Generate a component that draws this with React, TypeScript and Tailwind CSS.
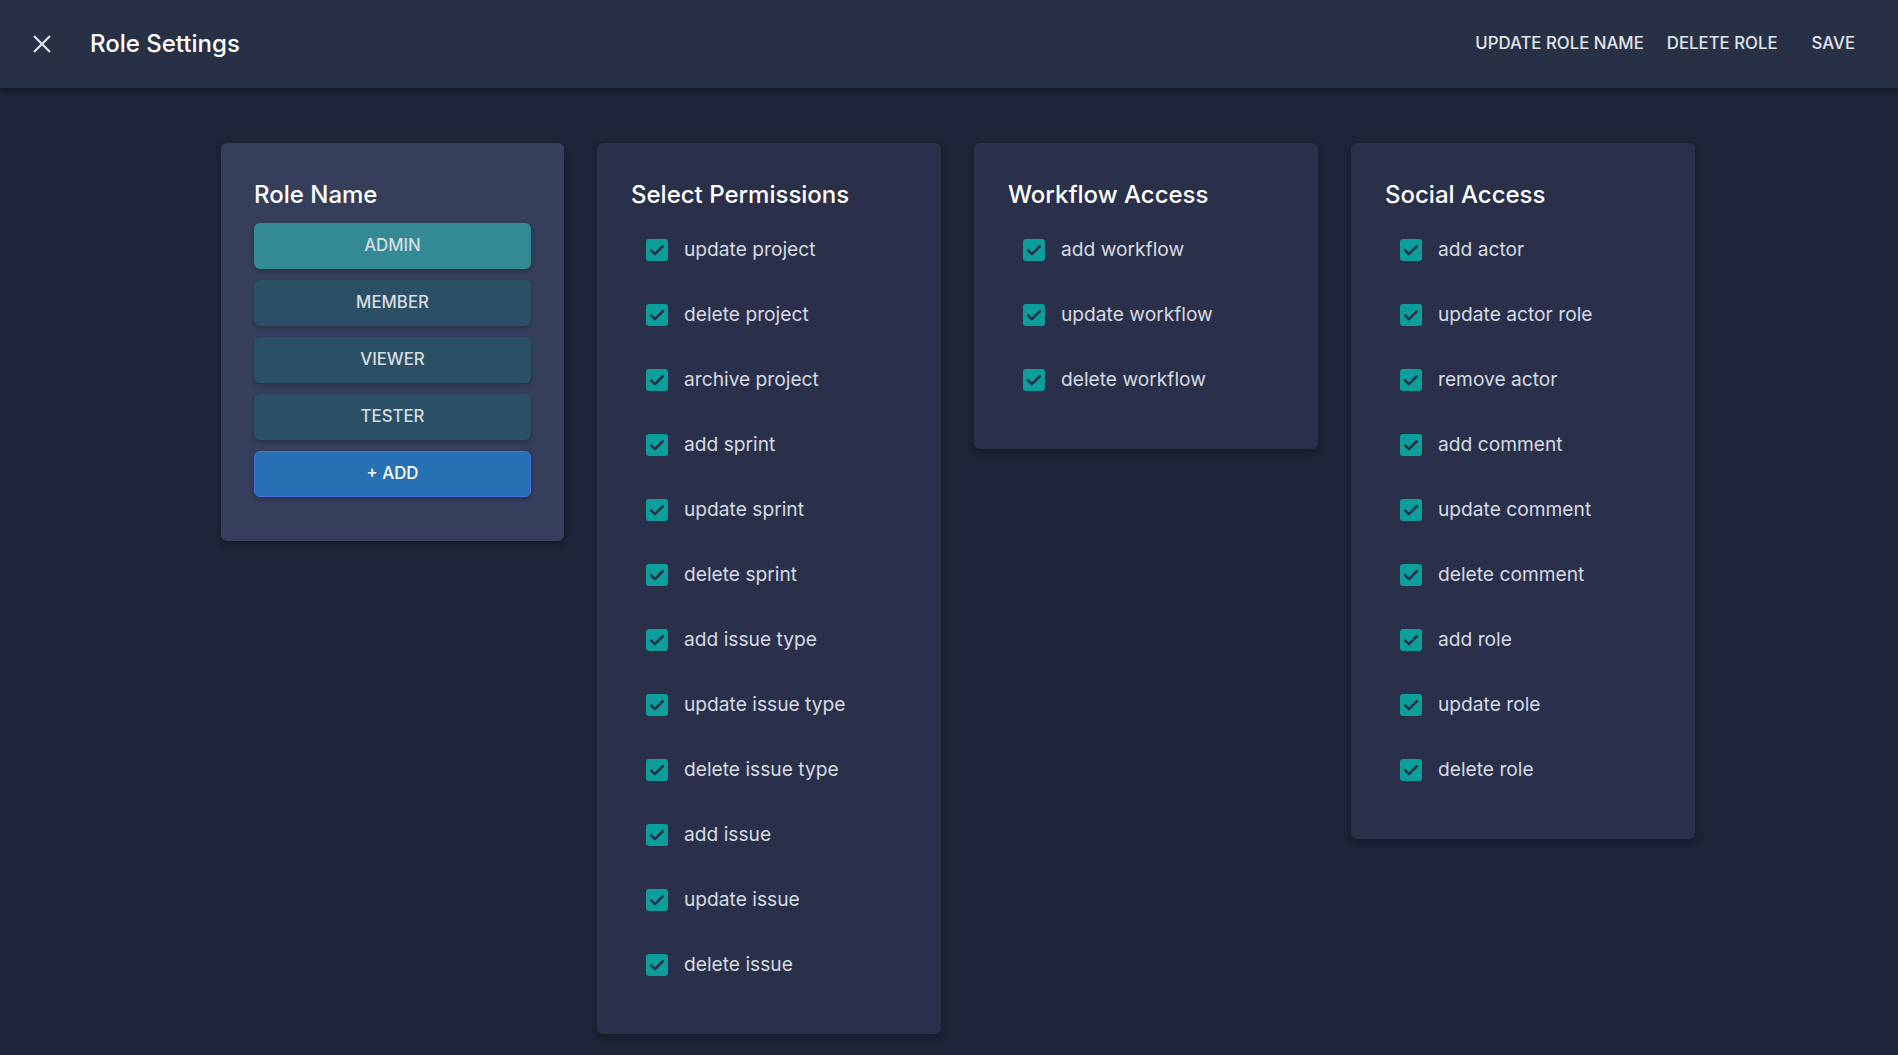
const permissions = [
  "update project",
  "delete project",
  "archive project",
  "add sprint",
  "update sprint",
  "delete sprint",
  "add issue type",
  "update issue type",
  "delete issue type",
  "add issue",
  "update issue",
  "delete issue",
];

const workflow = ["add workflow", "update workflow", "delete workflow"];

const social = [
  "add actor",
  "update actor role",
  "remove actor",
  "add comment",
  "update comment",
  "delete comment",
  "add role",
  "update role",
  "delete role",
];

const roles = ["ADMIN", "MEMBER", "VIEWER", "TESTER"];

function CheckRow({ label }: { label: string }) {
  return (
    <label className="flex h-[65px] items-center pl-[15px]">
      <span className="flex h-[22px] w-[22px] items-center justify-center rounded-[3px] bg-[#0c9e9a]">
        <svg viewBox="0 0 24 24" className="h-[20px] w-[20px]" fill="none">
          <path d="M5 12.5l4.5 4.5L19 7.5" stroke="#2a3049" strokeWidth="3" strokeLinecap="round" strokeLinejoin="round" />
        </svg>
      </span>
      <span className="ml-[16px] text-[19.2px] text-[#d6dae2]">{label}</span>
    </label>
  );
}

function Card({ title, items }: { title: string; items: string[] }) {
  return (
    <div className="w-[344px] rounded-md bg-[#2a3049] px-[34px] pt-[36px] pb-[37px] shadow-[0_3px_8px_rgba(0,0,0,0.3)]">
      <h2 className="text-[24px] font-medium leading-[32px] text-white">{title}</h2>
      <div className="mt-[6px] flex flex-col">
        {items.map((i) => (
          <CheckRow key={i} label={i} />
        ))}
      </div>
    </div>
  );
}

export default function App() {
  return (
    <div className="min-h-[1055px] bg-[#1e2439]" style={{ fontFamily: "Inter, 'Noto Sans', sans-serif" }}>
      <header className="relative z-10 flex h-[88px] items-center bg-[#283046] shadow-[0_3px_6px_rgba(0,0,0,0.35)]">
        <button className="ml-[33px] flex h-[18px] w-[18px] items-center justify-center">
          <svg viewBox="0 0 18 18" className="h-[18px] w-[18px]">
            <path d="M1 1L17 17M17 1L1 17" stroke="#dfe2e8" strokeWidth="2.2" />
          </svg>
        </button>
        <h1 className="ml-[39px] text-[24px] font-medium text-white">Role Settings</h1>
        <div className="ml-auto mr-[43px] flex items-center text-[16.8px] font-medium text-[#e2e5ea]">
          <button>UPDATE ROLE NAME</button>
          <button className="ml-[23px]">DELETE ROLE</button>
          <button className="ml-[34px]">SAVE</button>
        </div>
      </header>

      <main className="flex items-start gap-[33px] pl-[221px] pt-[55px]">
        <div className="w-[343px] rounded-md bg-[#353e5b] px-[33px] pt-[36px] pb-[44px] shadow-[0_3px_8px_rgba(0,0,0,0.3)]">
          <h2 className="text-[24px] font-medium leading-[32px] text-white">Role Name</h2>
          <div className="mt-[12px] flex flex-col gap-[11px]">
            {roles.map((r, i) => (
              <button
                key={r}
                className={
                  "h-[46px] rounded-md text-[16.8px] font-medium text-[#d8dde1] shadow-[0_2px_4px_rgba(0,0,0,0.25)] " +
                  (i === 0 ? "bg-[#338a94]" : "bg-[#2b4f64]")
                }
              >
                {r}
              </button>
            ))}
            <button className="h-[46px] rounded-md border border-[#4a6fe0] bg-[#2770b4] text-[16.8px] font-medium text-white shadow-[0_2px_4px_rgba(0,0,0,0.25)]">
              + ADD
            </button>
          </div>
        </div>
        <Card title="Select Permissions" items={permissions} />
        <Card title="Workflow Access" items={workflow} />
        <Card title="Social Access" items={social} />
      </main>
    </div>
  );
}
